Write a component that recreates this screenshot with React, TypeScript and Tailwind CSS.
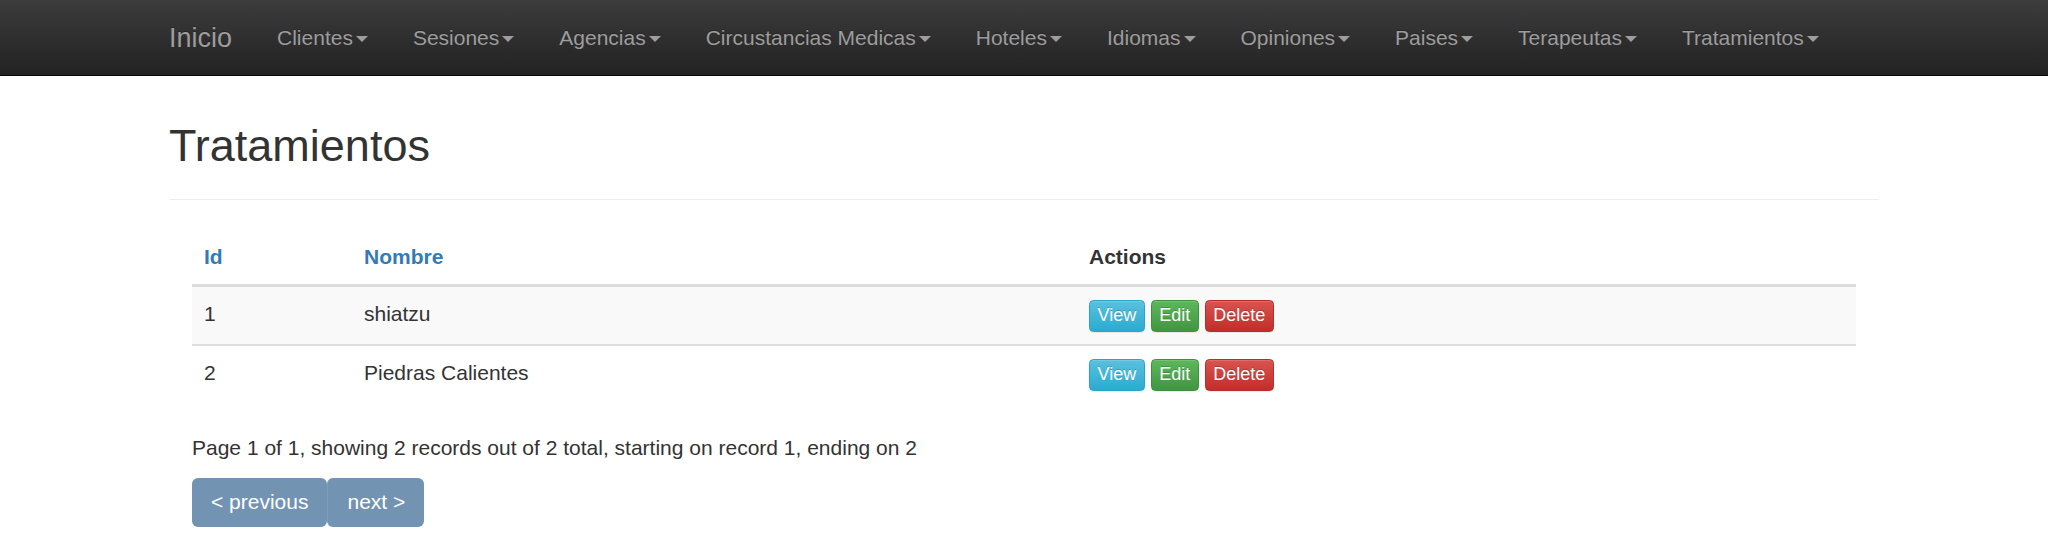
import React from 'react'

type Row = { id: number; nombre: string }

const menus = ['Clientes', 'Sesiones', 'Agencias', 'Circustancias Medicas', 'Hoteles', 'Idiomas', 'Opiniones', 'Paises', 'Terapeutas', 'Tratamientos']

const rows: Row[] = [
  { id: 1, nombre: 'shiatzu' },
  { id: 2, nombre: 'Piedras Calientes' },
]

function Caret() {
  return <span className="inline-block w-0 h-0 ml-[3px] align-middle border-t-[6px] border-t-[#9d9d9d] border-x-[6px] border-x-transparent" />
}

function Navbar() {
  return (
    <nav className="h-[75.5px] bg-[linear-gradient(to_bottom,#3c3c3c_0%,#222222_100%)] border-b-[1.5px] border-[#080808]">
      <div className="w-[1755px] mx-auto px-[22.5px] flex">
        <a className="-ml-[22.5px] px-[22.5px] py-[22.5px] h-[74px] text-[27px] leading-[30px] text-[#9d9d9d] [text-shadow:0_-1px_0_rgba(0,0,0,0.25)]">Inicio</a>
        <ul className="flex">
          {menus.map(m => (
            <li key={m}>
              <a className="block px-[22.5px] py-[22.5px] text-[21px] leading-[30px] text-[#9d9d9d] [text-shadow:0_-1px_0_rgba(0,0,0,0.25)] whitespace-nowrap">
                {m}<Caret />
              </a>
            </li>
          ))}
        </ul>
      </div>
    </nav>
  )
}

const btnBase = 'h-[31.5px] px-[7.5px] rounded-[4.5px] border text-[18px] leading-[27px] text-white [text-shadow:0_-1px_0_rgba(0,0,0,0.2)] shadow-[inset_0_1px_0_rgba(255,255,255,0.15),0_1px_1px_rgba(0,0,0,0.075)]'

function Actions() {
  return (
    <div className="flex gap-[6px] pt-[1.5px]">
      <button className={`${btnBase} bg-[linear-gradient(to_bottom,#5bc0de_0%,#2aabd2_100%)] border-[#28a4c9]`}>View</button>
      <button className={`${btnBase} bg-[linear-gradient(to_bottom,#5cb85c_0%,#419641_100%)] border-[#3e8f3e]`}>Edit</button>
      <button className={`${btnBase} bg-[linear-gradient(to_bottom,#d9534f_0%,#c12e2a_100%)] border-[#b92c28]`}>Delete</button>
    </div>
  )
}

export default function App() {
  return (
    <div className="min-h-[550px] bg-white text-[#333] text-[21px] leading-[30px] font-['Liberation_Sans',Arial,sans-serif]">
      <Navbar />
      <div className="w-[1755px] mx-auto px-[22.5px]">
        {/* Header */}
        <div className="mt-[45px] mb-[30px] pb-[13.5px] border-b border-[#eee]">
          <h2 className="text-[45px] leading-[1.1] mb-[15px]">Tratamientos</h2>
        </div>

        <div className="px-[23px]">
          <table className="w-full border-collapse mb-[30px]">
            <thead>
              <tr className="border-b-[3px] border-[#ddd]">
                <th className="w-[160px] p-[12px] text-left font-bold text-[#337ab7]">Id</th>
                <th className="w-[725px] p-[12px] text-left font-bold text-[#337ab7]">Nombre</th>
                <th className="p-[12px] text-left font-bold">Actions</th>
              </tr>
            </thead>
            <tbody>
              {rows.map((r, i) => (
                <tr key={r.id} className={i % 2 === 0 ? 'bg-[#f9f9f9]' : 'border-t-2 border-[#ddd]'}>
                  <td className="p-[12px] align-top">{r.id}</td>
                  <td className="p-[12px] align-top">{r.nombre}</td>
                  <td className="p-[12px] align-top"><Actions /></td>
                </tr>
              ))}
            </tbody>
          </table>

          <p className="mb-[15px]">Page 1 of 1, showing 2 records out of 2 total, starting on record 1, ending on 2</p>

          {/* Pagination */}
          <div className="flex">
            <span className="h-[49.5px] flex items-center px-[19px] bg-[#7393b3] text-white rounded-[6px]">&lt; previous</span>
            <span className="h-[49.5px] flex items-center px-[19px] bg-[#7393b3] text-white rounded-[6px] border-l border-[#7f9dbb]">next &gt;</span>
          </div>
        </div>
      </div>
    </div>
  )
}
